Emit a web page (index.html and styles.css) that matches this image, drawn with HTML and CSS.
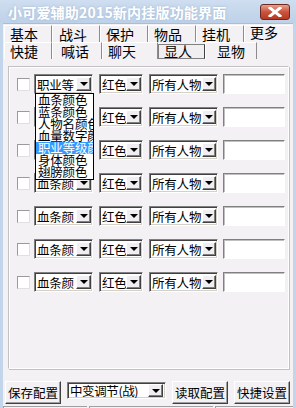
FILE: index.html
```html
<!DOCTYPE html>
<html lang="zh-Hans">
<head>
    <meta charset="UTF-8">
    <title>小可爱辅助2015新内挂版功能界面</title>
    <link rel="stylesheet" href="styles.css">
</head>
<body>
<div class="window">
    <!-- 标题栏 -->
    <header class="titlebar">
        <span class="title">小可爱辅助2015新内挂版功能界面</span>
        <span class="close-btn">
            <svg width="14" height="10" viewBox="0 0 14 10"><path d="M2 1 L12 9 M12 1 L2 9" stroke="#fff" stroke-width="3" stroke-linecap="square"/></svg>
        </span>
    </header>
    <div class="client">
        <!-- 选项卡 -->
        <nav class="tabs">
            <div class="tab-row">
                <span class="tab">基本</span>
                <span class="tab">战斗</span>
                <span class="tab">保护</span>
                <span class="tab">物品</span>
                <span class="tab">挂机</span>
                <span class="tab last raised">更多</span>
            </div>
            <div class="tab-row">
                <span class="tab">快捷</span>
                <span class="tab">喊话</span>
                <span class="tab">聊天</span>
                <span class="tab active">显人</span>
                <span class="tab">显物</span>
            </div>
        </nav>
        <!-- 内容 -->
        <main class="panel">
            <div class="row">
                <span class="check"></span>
                <div class="combo c1 open">
                    <span class="text">职业等</span><span class="arrow"></span>
                    <ul class="droplist">
                        <li>血条颜色</li>
                        <li>蓝条颜色</li>
                        <li>人物名颜色</li>
                        <li>血量数字颜色</li>
                        <li class="sel">职业等级颜色</li>
                        <li>身体颜色</li>
                        <li>翅膀颜色</li>
                    </ul>
                </div>
                <div class="combo c2"><span class="text">红色</span><span class="arrow"></span></div>
                <div class="combo c3"><span class="text">所有人物</span><span class="arrow"></span></div>
                <span class="input"></span>
            </div>
            <div class="row">
                <span class="check"></span>
                <div class="combo c1"><span class="text">血条颜</span><span class="arrow"></span></div>
                <div class="combo c2"><span class="text">红色</span><span class="arrow"></span></div>
                <div class="combo c3"><span class="text">所有人物</span><span class="arrow"></span></div>
                <span class="input"></span>
            </div>
            <div class="row">
                <span class="check"></span>
                <div class="combo c1"><span class="text">血条颜</span><span class="arrow"></span></div>
                <div class="combo c2"><span class="text">红色</span><span class="arrow"></span></div>
                <div class="combo c3"><span class="text">所有人物</span><span class="arrow"></span></div>
                <span class="input"></span>
            </div>
            <div class="row">
                <span class="check"></span>
                <div class="combo c1"><span class="text">血条颜</span><span class="arrow"></span></div>
                <div class="combo c2"><span class="text">红色</span><span class="arrow"></span></div>
                <div class="combo c3"><span class="text">所有人物</span><span class="arrow"></span></div>
                <span class="input"></span>
            </div>
            <div class="row">
                <span class="check"></span>
                <div class="combo c1"><span class="text">血条颜</span><span class="arrow"></span></div>
                <div class="combo c2"><span class="text">红色</span><span class="arrow"></span></div>
                <div class="combo c3"><span class="text">所有人物</span><span class="arrow"></span></div>
                <span class="input"></span>
            </div>
            <div class="row">
                <span class="check"></span>
                <div class="combo c1"><span class="text">血条颜</span><span class="arrow"></span></div>
                <div class="combo c2"><span class="text">红色</span><span class="arrow"></span></div>
                <div class="combo c3"><span class="text">所有人物</span><span class="arrow"></span></div>
                <span class="input"></span>
            </div>
            <div class="row">
                <span class="check"></span>
                <div class="combo c1"><span class="text">血条颜</span><span class="arrow"></span></div>
                <div class="combo c2"><span class="text">红色</span><span class="arrow"></span></div>
                <div class="combo c3"><span class="text">所有人物</span><span class="arrow"></span></div>
                <span class="input"></span>
            </div>
        </main>
        <!-- 底部按钮 -->
        <footer class="actions">
            <span class="btn">保存配置</span>
            <div class="combo c4"><span class="text">中变调节(战)</span><span class="arrow"></span></div>
            <span class="btn">读取配置</span>
            <span class="btn">快捷设置</span>
        </footer>
        <div class="statusbar">
            <span class="part p1"></span>
            <span class="part p2"></span>
            <span class="part p3"></span>
        </div>
    </div>
</div>
</body>
</html>
```

FILE: styles.css
```css
* { margin: 0; padding: 0; box-sizing: border-box; }
ul, li { list-style: none; }

body {
    width: 296px;
    height: 408px;
    overflow: hidden;
    font-family: "Noto Sans CJK SC", "DejaVu Sans", sans-serif;
    font-size: 13px;
    color: #000;
}

.window {
    width: 296px;
    height: 408px;
    display: flex;
    flex-direction: column;
    background: #c3d5ea;
}

/* 标题栏 */
.titlebar {
    height: 23px;
    display: flex;
    align-items: center;
    justify-content: space-between;
    padding: 0 6px 0 8px;
    background: linear-gradient(#cfdef0, #bdd1e8);
}
.titlebar .title {
    color: #fff;
    font-weight: bold;
    font-size: 14px;
    letter-spacing: 0.2px;
    text-shadow: 0 0 3px #9fb5d0;
}
.close-btn {
    width: 30px;
    height: 16px;
    margin-top: 1px;
    display: flex;
    align-items: center;
    justify-content: center;
    border: 1px solid #6b2a20;
    border-radius: 3px;
    background: linear-gradient(#e8a08c, #c9533c 50%, #b83a22);
}

.client {
    flex: 1;
    margin: 0 3px 0 3px;
    background: #f4f1f4;
    display: flex;
    flex-direction: column;
    border-top: 1px solid #a9bdd6;
}

/* 选项卡 */
.tabs {
    padding: 1px 0 0 1px;
}
.tab-row {
    display: flex;
    height: 17px;
}
.tab {
    width: 48px;
    height: 17px;
    line-height: 16px;
    padding-left: 5px;
    border-left: 1px solid #fff;
    border-top: 1px solid #fff;
    border-right: 1px solid #8c8c8c;
    font-size: 14px;
}
.tab-row:first-child .tab:nth-child(2) { padding-left: 6px; }
.tab.raised { line-height: 13px; }
.tab.last { border-right: none; width: 46px; }
.tab-row:last-child .tab:nth-child(2) { width: 50px; padding-left: 8px; }
.tab-row:last-child .tab:nth-child(3) { width: 56px; padding-left: 5px; }
.tab.active {
    width: 47px;
    margin-top: 2px;
    height: 15px;
    line-height: 13px;
    padding-left: 5px;
    border: 1px solid #808080;
    border-right-color: #404040;
    background: #f0eef0;
}
.tab-row:last-child .tab:nth-child(5) { width: 52px; padding-left: 11px; }

/* 内容面板 */
.panel {
    margin: 7px 4px 0 5px;
    height: 303px;
    border: 1px solid #c2c0c2;
    border-right-color: #fff;
    border-bottom-color: #fff;
    box-shadow: inset 1px 1px 0 #fff, 1px 1px 0 #c2c0c2;
    padding: 7px 0 0 8px;
    display: flex;
    flex-direction: column;
    gap: 13px;
}
.row {
    height: 20px;
    display: flex;
    align-items: center;
}
.check {
    width: 13px;
    height: 13px;
    margin-right: 4px;
    background: #fff;
    border: 1px solid #9a9a9a;
    border-right-color: #e0e0e0;
    border-bottom-color: #e0e0e0;
}

/* 下拉框 */
.combo {
    position: relative;
    height: 20px;
    display: flex;
    align-items: center;
    background: #fff;
    border: 1px solid #808080;
    border-right-color: #fff;
    border-bottom-color: #fff;
    box-shadow: inset 1px 1px 0 #404040, inset -1px -1px 0 #d4d0c8;
    padding: 2px 1px 2px 2px;
}
.combo .text {
    flex: 1;
    overflow: hidden;
    white-space: nowrap;
    font-size: 12.5px;
    line-height: 15px;
    letter-spacing: -0.2px;
}
.combo .arrow {
    flex: none;
    width: 15px;
    height: 14px;
    background: #f0eef0;
    border: 1px solid #fff;
    border-right-color: #404040;
    border-bottom-color: #404040;
    box-shadow: inset -1px -1px 0 #808080;
    position: relative;
}
.combo .arrow:after {
    content: "";
    position: absolute;
    left: 3px;
    top: 4px;
    border-left: 4px solid transparent;
    border-right: 4px solid transparent;
    border-top: 4px solid #000;
}
.c1 { width: 59px; margin-right: 6px; }
.c2 { width: 44px; margin-right: 6px; }
.c3 { width: 69px; margin-right: 5px; }
.c3 .arrow { width: 14px; }
.c3 .arrow:after { left: 2px; }
.c4 { width: 99px; height: 17px; padding: 1px 2px 1px 2px; }
.c4 .arrow { height: 13px; }
.c4 .text { line-height: 14px; letter-spacing: -0.4px; }

.droplist {
    position: absolute;
    left: 0;
    top: 18px;
    width: 59px;
    background: #fff;
    border: 1px solid #000;
    z-index: 2;
    overflow: hidden;
    padding-bottom: 1px;
}
.droplist li {
    height: 12px;
    line-height: 12px;
    padding-left: 2px;
    white-space: nowrap;
    font-size: 12.5px;
    letter-spacing: -0.2px;
}
.droplist li.sel {
    background: #3399ff;
    color: #fff;
}

.input {
    width: 62px;
    height: 20px;
    background: #fff;
    border: 1px solid #808080;
    border-right-color: #fff;
    border-bottom-color: #fff;
    box-shadow: inset 1px 1px 0 #c0c0c0;
}

/* 底部按钮 */
.actions {
    margin-top: 12px;
    padding-left: 2px;
    display: flex;
    align-items: flex-start;
    gap: 6px;
}
.btn {
    width: 56px;
    height: 23px;
    line-height: 22px;
    text-align: center;
    font-size: 12.5px;
    border: 1px solid #fff;
    border-right-color: #404040;
    border-bottom-color: #404040;
    box-shadow: inset -1px -1px 0 #a0a0a0;
}
.actions .c4 { margin-top: 1px; }

.statusbar {
    margin-top: 2px;
    flex: 1;
    display: flex;
    gap: 2px;
}
.statusbar .part {
    border-top: 1px solid #a0a0a0;
    border-left: 1px solid #a0a0a0;
}
.p1 { width: 84px; }
.p2 { width: 124px; }
.p3 { flex: 1; }
```
